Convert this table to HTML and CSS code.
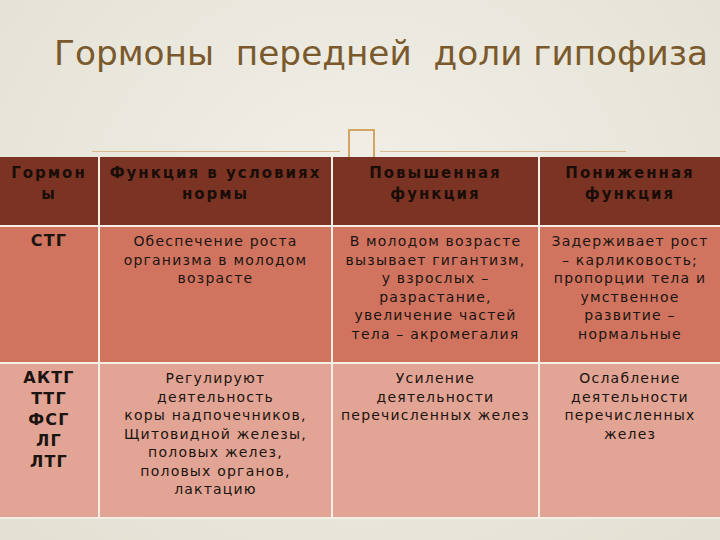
FILE: index.html
```html
<!DOCTYPE html>
<html lang="ru">
<head>
<meta charset="utf-8">
<link rel="stylesheet" href="styles.css">
</head>
<body>
<div class="slide">
  <h1 class="title">Гормоны&nbsp; передней&nbsp; доли гипофиза</h1>
  <div class="deco">
    <span class="deco-line left"></span>
    <span class="deco-box"></span>
    <span class="deco-line right"></span>
  </div>
  <div class="grid">
    <div class="cell head c1">Гормон ы</div>
    <div class="cell head">Функция в условиях нормы</div>
    <div class="cell head">Повышенная функция</div>
    <div class="cell head">Пониженная функция</div>

    <div class="cell r2 name">СТГ</div>
    <div class="cell r2">Обеспечение роста<br>организма в молодом<br>возрасте</div>
    <div class="cell r2">В молодом возрасте<br>вызывает гигантизм,<br>у взрослых –<br>разрастание,<br>увеличение частей<br>тела – акромегалия</div>
    <div class="cell r2">Задерживает рост<br>– карликовость;<br>пропорции тела и<br>умственное<br>развитие –<br>нормальные</div>

    <div class="cell r3 name">АКТГ<br>ТТГ<br>ФСГ<br>ЛГ<br>ЛТГ</div>
    <div class="cell r3">Регулируют<br>деятельность<br>коры надпочечников,<br>Щитовидной железы,<br>половых желез,<br>половых органов,<br>лактацию</div>
    <div class="cell r3">Усиление<br>деятельности<br>перечисленных желез</div>
    <div class="cell r3">Ослабление<br>деятельности<br>перечисленных<br>желез</div>
  </div>
</div>
</body>
</html>
```
FILE: styles.css
```css
html, body {
  margin: 0;
  padding: 0;
}
body {
  width: 720px;
  height: 540px;
  overflow: hidden;
  background: radial-gradient(ellipse at 50% 40%, #f1efe7 0%, #e9e7dc 60%, #e2e0d2 100%);
  font-family: "DejaVu Sans", sans-serif;
}
.slide {
  width: 720px;
  height: 540px;
  display: flex;
  flex-direction: column;
}
.title {
  margin: 0;
  padding: 31px 0 0 54px;
  height: 100px;
  box-sizing: border-box;
  font-family: "DejaVu Sans", sans-serif;
  font-weight: normal;
  font-size: 34.3px;
  line-height: 44px;
  color: #7a5a2d;
  white-space: nowrap;
}
.deco {
  height: 57px;
  display: flex;
  align-items: flex-start;
  padding-top: 29px;
  box-sizing: border-box;
}
.deco-line {
  height: 1px;
  background: #d8bb8c;
  margin-top: 22px;
}
.deco-line.left {
  margin-left: 92px;
  width: 248px;
}
.deco-line.right {
  width: 246px;
}
.deco-box {
  width: 23px;
  height: 26px;
  border: 2px solid #d3a462;
  margin: 0 5px 0 8px;
}
.grid {
  display: grid;
  grid-template-columns: 98px 231px 205px 180px;
  grid-template-rows: 68px 135px 153px;
  column-gap: 2px;
  row-gap: 2px;
  padding: 0 0 2px 0;
  background: #f6efe6;
  width: 720px;
}
.cell {
  text-align: center;
  color: #1c1410;
  font-size: 14px;
  line-height: 18.5px;
  letter-spacing: 1.2px;
  padding: 5px 2px 0 2px;
}
.head {
  background: #7b3424;
  font-weight: bold;
  font-size: 15px;
  line-height: 21px;
  letter-spacing: 2px;
  padding-top: 6px;
  color: #1a0d08;
}
.head.c1 {
  padding-left: 6px;
  padding-right: 6px;
}
.r2 {
  background: #d07460;
}
.r3 {
  background: #e2a494;
}
.name {
  font-weight: bold;
  font-size: 16px;
  line-height: 21px;
  letter-spacing: 1.2px;
  padding-top: 3px;
}
```
